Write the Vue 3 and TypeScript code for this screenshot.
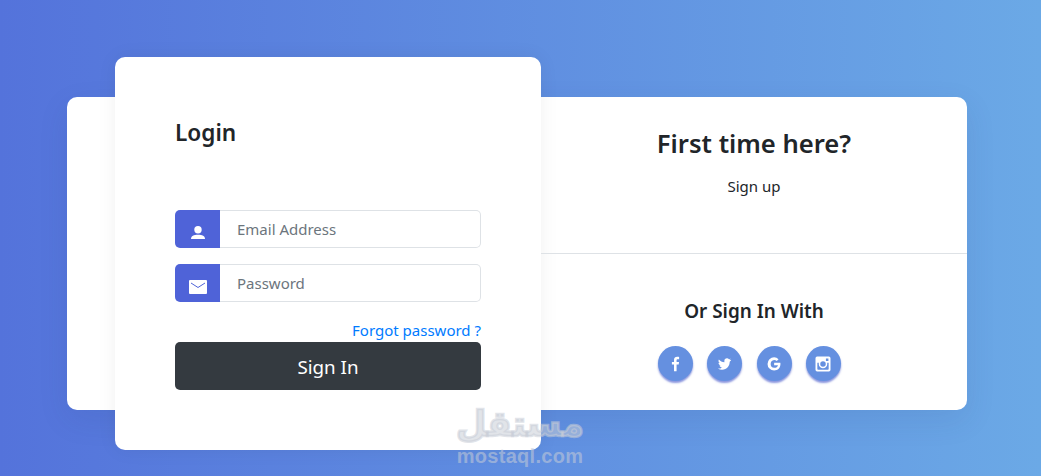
<script setup lang="ts">
const socials = [
  { name: 'facebook', size: 17, path: 'M13.500 23v-9.500h3l.5-3.700h-3.500V7.800c0-1 .3-1.700 1.800-1.700h1.800V2.800c-.4 0-1.500-.2-2.700-.2-2.700 0-4.500 1.600-4.500 4.600v2.600H6.900v3.700h3v9.500z' },
  { name: 'twitter', size: 15, path: 'M22.500 5.800c-.8.3-1.600.6-2.500.7.900-.5 1.600-1.400 1.900-2.400-.8.5-1.800.9-2.700 1A4.300 4.300 0 0 0 11.800 9c0 .3 0 .7.1 1C8.300 9.800 5.100 8.100 3 5.500c-.4.7-.6 1.400-.6 2.200 0 1.500.8 2.800 1.900 3.600-.7 0-1.400-.2-1.900-.5v.1c0 2.100 1.500 3.800 3.400 4.200-.6.2-1.300.2-1.900.1.500 1.700 2.100 2.900 4 3A8.600 8.600 0 0 1 1.500 20a12.100 12.100 0 0 0 6.600 1.900c7.900 0 12.200-6.500 12.200-12.200v-.6c.9-.6 1.600-1.400 2.200-2.300z' },
  { name: 'google', size: 16, path: 'M12.200 10.300v3.500h5.800c-.5 2.400-2.600 4-5.800 4a6 6 0 0 1 0-11.900c1.500 0 2.900.5 4 1.500l2.600-2.600A9.900 9.900 0 0 0 12.200 2a9.900 9.900 0 1 0 0 19.800c5.700 0 9.500-4 9.500-9.700 0-.6-.1-1.200-.2-1.800z' },
  { name: 'instagram', size: 20, path: 'M5 3h14a2 2 0 0 1 2 2v14a2 2 0 0 1-2 2H5a2 2 0 0 1-2-2V5a2 2 0 0 1 2-2zm10.500 2.500v3h3v-3zM5.200 10.500V18c0 .5.300.8.800.8h12c.5 0 .8-.3.800-.8v-7.500h-1.900a6.800 6.800 0 0 1 .2 1.500 5.100 5.100 0 0 1-10.200 0c0-.5.100-1 .2-1.500zM12 8.700a3.300 3.300 0 1 0 0 6.600 3.300 3.300 0 0 0 0-6.600z' },
];
</script>

<template>
  <div class="page">
    <div class="panel">
      <div class="login-card">
        <h2 class="login-title">Login</h2>
        <form class="login-form" @submit.prevent>
          <div class="input-group">
            <span class="input-icon">
              <svg width="16" height="16" viewBox="0 0 16 16">
                <circle cx="8" cy="5.800" r="3.700" fill="#fff" />
                <path d="M1 15c0-3 2.800-4.300 7-4.300s7 1.300 7 4.300z" fill="#fff" />
              </svg>
            </span>
            <input class="input-field" type="text" placeholder="Email Address" />
          </div>
          <div class="input-group">
            <span class="input-icon">
              <svg class="mail" width="18" height="14" viewBox="0 0 18 14">
                <rect width="18" height="14" rx="1" fill="#fff" />
                <path d="M2 3l7 4.500L16 3" fill="none" stroke="#4f63d8" stroke-width="1" />
              </svg>
            </span>
            <input class="input-field" type="password" placeholder="Password" />
          </div>
          <a class="forgot" href="#">Forgot password ?</a>
          <button class="sign-in" type="submit">Sign In</button>
        </form>
      </div>

      <div class="side">
        <div class="signup">
          <h2 class="signup-title">First time here?</h2>
          <a class="signup-link" href="#">Sign up</a>
        </div>
        <div class="social">
          <h3 class="social-title">Or Sign In With</h3>
          <div class="social-list">
            <a v-for="s in socials" :key="s.name" class="social-btn" href="#" :aria-label="s.name">
              <svg :width="s.size" :height="s.size" viewBox="0 0 24 24"><path :d="s.path" fill="#fff" fill-rule="evenodd" /></svg>
            </a>
          </div>
        </div>
      </div>
    </div>

    <div class="watermark">
      <div class="wm-ar" dir="rtl" lang="ar">مستقل</div>
      <div class="wm-en">mostaql.com</div>
    </div>
  </div>
</template>

<style scoped>
.page {
  position: relative;
  height: 476px;
  box-sizing: border-box;
  padding-top: 97px;
  overflow: hidden;
  background: linear-gradient(to right, #5473db, #6ba9e6);
  font-family: "Noto Sans", "Liberation Sans", sans-serif;
  color: #212529;
}

.panel {
  display: flex;
  width: 900px;
  height: 313px;
  margin-left: 67px;
  border-radius: 10px;
  background: #fff;
  box-shadow: 0 10px 30px rgba(40, 60, 120, 0.1);
}

.login-card {
  flex: none;
  box-sizing: border-box;
  width: 426px;
  height: 393px;
  margin: -40px 0 0 48px;
  padding: 60px 60px 0;
  border-radius: 10px;
  background: #fff;
  box-shadow: 0 0 20px rgba(0, 0, 0, 0.06);
}

.login-title {
  margin: 0;
  font-size: 22.600px;
  line-height: 32px;
  font-weight: 600;
}

.login-form {
  display: flex;
  flex-direction: column;
  margin-top: 61px;
}

.input-group {
  display: flex;
  height: 38px;
  margin-bottom: 16px;
}

.input-icon {
  display: flex;
  flex: none;
  align-items: flex-end;
  justify-content: center;
  box-sizing: border-box;
  width: 45px;
  padding-bottom: 8px;
  border-radius: 5px 0 0 5px;
  background: #4f63d8;
}

.input-field {
  flex: 1;
  min-width: 0;
  box-sizing: border-box;
  padding: 0 17px;
  border: 1px solid #dee2e6;
  border-left: none;
  border-radius: 0 5px 5px 0;
  outline: none;
  font: inherit;
  font-size: 15px;
}

.input-field::placeholder {
  color: #6c757d;
  opacity: 1;
}

.forgot {
  align-self: flex-end;
  font-size: 15px;
  line-height: 24px;
  color: #007bff;
  text-decoration: none;
}

.sign-in {
  height: 48px;
  padding: 2px 0 0;
  border: none;
  border-radius: 5px;
  background: #343a40;
  font: inherit;
  font-size: 18.800px;
  color: #fff;
}

.side {
  display: flex;
  flex: 1;
  flex-direction: column;
  min-width: 0;
  text-align: center;
}

.signup {
  box-sizing: border-box;
  height: 157px;
  padding-top: 28px;
  border-bottom: 1px solid #dee2e6;
}

.signup-title {
  margin: 0;
  font-size: 25.600px;
  line-height: 38px;
  font-weight: 600;
}

.signup-link {
  display: block;
  margin-top: 11px;
  font-size: 15px;
  line-height: 24px;
  color: #212529;
  text-decoration: none;
}

.social {
  padding-top: 43px;
}

.social-title {
  margin: 0;
  font-size: 18.900px;
  line-height: 28px;
  font-weight: 600;
}

.social-list {
  display: flex;
  justify-content: center;
  gap: 14.250px;
  margin-top: 21px;
  padding-right: 9px;
}

.social-btn {
  display: flex;
  align-items: center;
  justify-content: center;
  width: 35px;
  height: 35px;
  border-radius: 50%;
  background: #6590e0;
  box-shadow: 0 2px 2px rgba(60, 80, 200, 0.6);
}

.watermark {
  position: absolute;
  left: 440px;
  top: 402px;
  width: 160px;
  text-align: center;
  color: rgba(200, 205, 215, 0.55);
  font-family: "DejaVu Sans", sans-serif;
  font-weight: 700;
  pointer-events: none;
}

.wm-ar {
  font-size: 35px;
  line-height: 44px;
  -webkit-text-stroke: 2.500px rgba(200, 205, 215, 0.55);
}

.wm-en {
  font-family: "Liberation Sans", sans-serif;
  font-size: 20px;
  line-height: 20px;
  letter-spacing: 0.300px;
}
</style>
